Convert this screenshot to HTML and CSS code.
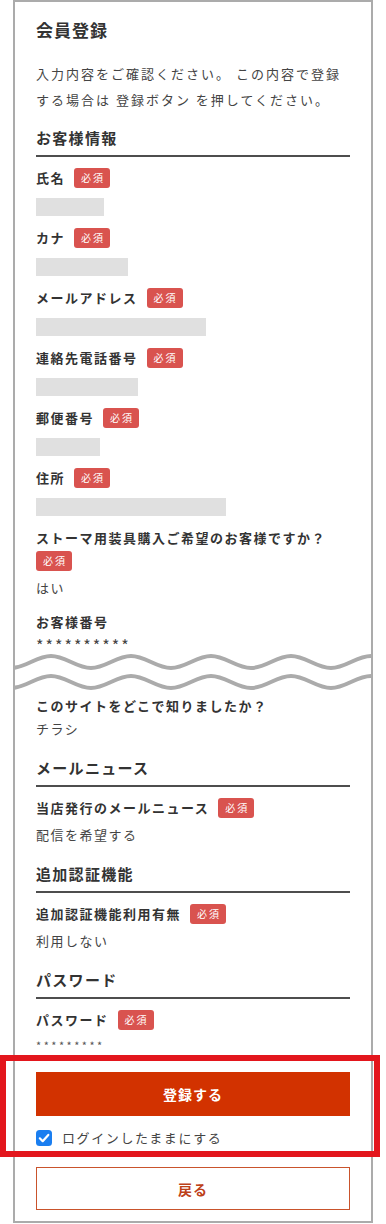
FILE: index.html
```html
<!DOCTYPE html>
<html lang="ja">
<head>
<meta charset="utf-8">
<title>会員登録</title>
<link rel="stylesheet" href="styles.css">
</head>
<body>
<main class="card">
  <h1 class="title">会員登録</h1>
  <p class="lead">入力内容をご確認ください。 この内容で登録する場合は 登録ボタン を押してください。</p>

  <section class="section section--first">
    <h2 class="section-title">お客様情報</h2>
    <div class="field">
      <div class="label"><span>氏名</span><span class="badge">必須</span></div>
      <div class="mask" style="width:68px"></div>
    </div>
    <div class="field">
      <div class="label"><span>カナ</span><span class="badge">必須</span></div>
      <div class="mask" style="width:92px"></div>
    </div>
    <div class="field">
      <div class="label"><span>メールアドレス</span><span class="badge">必須</span></div>
      <div class="mask" style="width:170px"></div>
    </div>
    <div class="field">
      <div class="label"><span>連絡先電話番号</span><span class="badge">必須</span></div>
      <div class="mask" style="width:102px"></div>
    </div>
    <div class="field">
      <div class="label"><span>郵便番号</span><span class="badge">必須</span></div>
      <div class="mask" style="width:64px"></div>
    </div>
    <div class="field">
      <div class="label"><span>住所</span><span class="badge">必須</span></div>
      <div class="mask" style="width:190px"></div>
    </div>
    <div class="field">
      <div class="label"><span>ストーマ用装具購入ご希望のお客様ですか？</span><span class="badge">必須</span></div>
      <div class="value value--after-badge">はい</div>
    </div>
    <div class="field field--loose">
      <div class="label"><span>お客様番号</span></div>
      <div class="value value--stars">**********</div>
    </div>

    <div class="cut" aria-hidden="true">
      <svg class="cut-svg" width="358" height="40" viewBox="0 0 358 40">
        <path id="wave" d="M -44 3 C -29.4 3 -18.6 15 -4 15 S 21.4 3 36 3 S 61.4 15 76 15 S 101.4 3 116 3 S 141.4 15 156 15 S 181.4 3 196 3 S 221.4 15 236 15 S 261.4 3 276 3 S 301.4 15 316 15 S 341.4 3 356 3 S 381.4 15 396 15" fill="none" stroke="#ababab" stroke-width="4"/>
        <use href="#wave" transform="translate(0 20)"/>
      </svg>
    </div>

    <div class="field field--after-cut">
      <div class="label"><span>このサイトをどこで知りましたか？</span></div>
      <div class="value">チラシ</div>
    </div>
  </section>

  <section class="section">
    <h2 class="section-title">メールニュース</h2>
    <div class="field">
      <div class="label"><span>当店発行のメールニュース</span><span class="badge">必須</span></div>
      <div class="value value--after-badge">配信を希望する</div>
    </div>
  </section>

  <section class="section">
    <h2 class="section-title">追加認証機能</h2>
    <div class="field">
      <div class="label"><span>追加認証機能利用有無</span><span class="badge">必須</span></div>
      <div class="value value--after-badge">利用しない</div>
    </div>
  </section>

  <section class="section">
    <h2 class="section-title">パスワード</h2>
    <div class="field">
      <div class="label"><span>パスワード</span><span class="badge">必須</span></div>
      <div class="value value--password">*********</div>
    </div>
  </section>

  <div class="actions">
    <div class="highlight">
      <button class="btn btn--primary" type="button">登録する</button>
      <div class="keep">
        <span class="checkbox">
          <svg width="16" height="16" viewBox="0 0 16 16"><rect x="0" y="0" width="16" height="16" rx="3.5" fill="#1a7ef0"/><path d="M3.8 8.3 L6.7 11.2 L12.3 4.9" fill="none" stroke="#fff" stroke-width="2.2" stroke-linecap="round" stroke-linejoin="round"/></svg>
        </span>
        <span class="keep-text">ログインしたままにする</span>
      </div>
    </div>
    <button class="btn btn--back" type="button">戻る</button>
  </div>
</main>
</body>
</html>
```

FILE: styles.css
```css
* { box-sizing: border-box; }
html, body { margin: 0; padding: 0; background: #fff; }
body {
  font-family: "Noto Sans CJK JP", "Noto Sans", sans-serif;
  color: #333;
}
.card {
  margin: 0 13px;
  border: 2px solid #ababab;
  padding: 16px 21px 11px;
}
.title {
  margin: 0;
  font-size: 17px;
  line-height: 24px;
  font-weight: 700;
  letter-spacing: 1px;
  color: #333;
}
.lead {
  margin: 19px 0 0;
  font-size: 13px;
  line-height: 26px;
  letter-spacing: 2px;
  color: #444;
}
.section { margin-top: 18px; }
.section--first { margin-top: 14px; }
.section-title {
  margin: 0;
  font-size: 15px;
  line-height: 22px;
  font-weight: 700;
  letter-spacing: 1.3px;
  color: #333;
  padding-bottom: 6px;
  border-bottom: 2px solid #4d4d4d;
}
.field { margin-top: 12px; }
.section-title + .field { margin-top: 11px; }
.field--loose { margin-top: 14px; }
.field--after-cut { margin-top: 3px; }
.label {
  display: flex;
  flex-wrap: wrap;
  align-items: center;
  column-gap: 9px;
  row-gap: 3px;
  font-size: 13px;
  line-height: 20px;
  font-weight: 700;
  letter-spacing: 1.5px;
  color: #333;
}
.badge {
  display: inline-block;
  width: 36px;
  height: 20px;
  line-height: 20px;
  padding-left: 2px;
  text-align: center;
  background: #d9534f;
  color: #fff;
  border-radius: 3px;
  font-size: 10px;
  font-weight: 400;
  letter-spacing: 2px;
}
.mask {
  height: 18px;
  margin-top: 10px;
  background: #e0e0e0;
}
.value {
  margin-top: 3px;
  font-size: 13px;
  line-height: 20px;
  letter-spacing: 1.5px;
  color: #444;
}
.value--after-badge { margin-top: 7px; }
.value--stars { font-size: 16px; letter-spacing: 2px; }
.value--password {
  margin-top: 5px;
  font-size: 11px;
  letter-spacing: 2.5px;
  color: #555;
}
.cut {
  margin: -2px -21px 0;
  height: 40px;
}
.cut-svg { display: block; }
.actions {
  display: flex;
  flex-direction: column;
  gap: 19px;
  margin-top: 17px;
}
.highlight {
  position: relative;
  display: flex;
  flex-direction: column;
  gap: 12px;
}
.highlight::after {
  content: "";
  position: absolute;
  left: -36px;
  right: -30px;
  top: -17px;
  bottom: -9px;
  border: 6px solid #e3161d;
  pointer-events: none;
}
.btn {
  display: block;
  width: 100%;
  margin: 0;
  padding: 0;
  font-family: inherit;
  font-size: 14px;
  font-weight: 700;
  letter-spacing: 1px;
  line-height: 20px;
  cursor: pointer;
}
.btn--primary {
  height: 44px;
  border: 0;
  background: #d23200;
  color: #fff;
}
.keep {
  display: flex;
  align-items: center;
  gap: 10px;
  height: 20px;
  font-size: 13px;
  line-height: 20px;
  letter-spacing: 1.6px;
  color: #444;
}
.checkbox { display: block; width: 16px; height: 16px; flex: none; }
.checkbox svg { display: block; }
.btn--back {
  height: 43px;
  border: 1px solid #c9532c;
  background: #fff;
  color: #bd4119;
}
```
